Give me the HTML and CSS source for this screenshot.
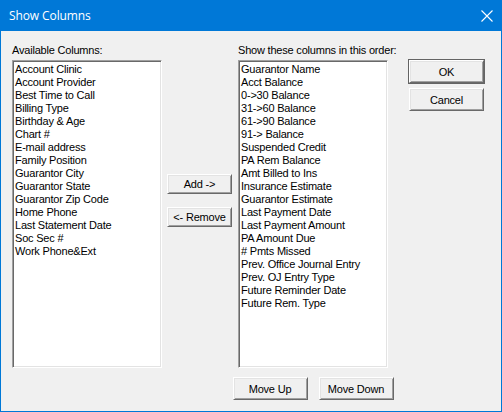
FILE: index.html
```html
<!DOCTYPE html>
<html>
<head>
<meta charset="utf-8">
<link rel="stylesheet" href="styles.css">
</head>
<body>
<div class="window">
  <div class="titlebar">
    <span class="title">Show Columns</span>
    <svg class="close" width="12" height="12" viewBox="0 0 12 12"><path d="M0.5 0.5 L11.5 11.5 M11.5 0.5 L0.5 11.5" stroke="#fff" stroke-width="1.1" fill="none"/></svg>
  </div>
  <div class="content">
    <div class="col col-left">
      <div class="label">Available Columns:</div>
      <div class="listbox">
        <div class="item">Account Clinic</div>
        <div class="item">Account Provider</div>
        <div class="item">Best Time to Call</div>
        <div class="item">Billing Type</div>
        <div class="item">Birthday &amp; Age</div>
        <div class="item">Chart #</div>
        <div class="item">E-mail address</div>
        <div class="item">Family Position</div>
        <div class="item">Guarantor City</div>
        <div class="item">Guarantor State</div>
        <div class="item">Guarantor Zip Code</div>
        <div class="item">Home Phone</div>
        <div class="item">Last Statement Date</div>
        <div class="item">Soc Sec #</div>
        <div class="item">Work Phone&amp;Ext</div>
      </div>
    </div>
    <div class="col col-mid">
      <button class="btn btn-small">Add -&gt;</button>
      <button class="btn btn-small">&lt;- Remove</button>
    </div>
    <div class="col col-right">
      <div class="label">Show these columns in this order:</div>
      <div class="listbox">
        <div class="item">Guarantor Name</div>
        <div class="item">Acct Balance</div>
        <div class="item">0-&gt;30 Balance</div>
        <div class="item">31-&gt;60 Balance</div>
        <div class="item">61-&gt;90 Balance</div>
        <div class="item">91-&gt; Balance</div>
        <div class="item">Suspended Credit</div>
        <div class="item">PA Rem Balance</div>
        <div class="item">Amt Billed to Ins</div>
        <div class="item">Insurance Estimate</div>
        <div class="item">Guarantor Estimate</div>
        <div class="item">Last Payment Date</div>
        <div class="item">Last Payment Amount</div>
        <div class="item">PA Amount Due</div>
        <div class="item"># Pmts Missed</div>
        <div class="item">Prev. Office Journal Entry</div>
        <div class="item">Prev. OJ Entry Type</div>
        <div class="item">Future Reminder Date</div>
        <div class="item">Future Rem. Type</div>
      </div>
      <div class="move-row">
        <button class="btn">Move Up</button>
        <button class="btn">Move Down</button>
      </div>
    </div>
    <div class="col col-side">
      <button class="btn btn-default">OK</button>
      <button class="btn">Cancel</button>
    </div>
  </div>
</div>
</body>
</html>
```
FILE: styles.css
```css
html, body {
  margin: 0;
  padding: 0;
  background: #f0f0f0;
}

.window {
  width: 502px;
  height: 412px;
  box-sizing: border-box;
  border: 1px solid #0078d7;
  border-top: none;
  background: #f0f0f0;
  font-family: "Liberation Sans", Arial, sans-serif;
  font-size: 11px;
  letter-spacing: -0.2px;
  color: #000;
  overflow: hidden;
}

.titlebar {
  height: 31px;
  background: #0078d7;
  display: flex;
  align-items: center;
  justify-content: space-between;
  padding: 0 8px 0 8px;
  margin: 0 -1px;
  box-sizing: border-box;
}

.title {
  color: #fff;
  font-family: "Open Sans", "Noto Sans", sans-serif;
  font-size: 12px;
  letter-spacing: -0.1px;
  padding-left: 1px;
  padding-bottom: 1px;
}

.close {
  margin-right: 1px;
  margin-top: 1px;
}

.content {
  display: flex;
  align-items: flex-start;
  padding: 13px 0 0 11px;
}

.col {
  display: flex;
  flex-direction: column;
}

.col-left, .col-right {
  width: 150px;
  flex-shrink: 0;
}

.label {
  height: 13px;
  line-height: 13px;
  margin-bottom: 3px;
  white-space: nowrap;
}

.listbox {
  height: 308px;
  box-sizing: border-box;
  background: #fff;
  border-top: 1px solid #a0a0a0;
  border-left: 1px solid #a0a0a0;
  border-right: 1px solid #fff;
  border-bottom: 1px solid #fff;
  box-shadow: inset 1px 1px 0 #696969, inset -1px -1px 0 #e3e3e3;
  padding: 2px 2px;
  overflow: hidden;
}

.item {
  height: 13px;
  line-height: 13px;
  white-space: nowrap;
}

.col-mid {
  width: 65px;
  flex-shrink: 0;
  margin-left: 5px;
  margin-right: 6px;
  padding-top: 130px;
  gap: 13px;
}

.btn {
  width: 75px;
  height: 23px;
  flex-shrink: 0;
  box-sizing: border-box;
  padding: 0;
  margin: 0;
  font-family: "Liberation Sans", Arial, sans-serif;
  font-size: 11px;
  letter-spacing: -0.2px;
  color: #000;
  background: #f0f0f0;
  border-top: 1px solid #fff;
  border-left: 1px solid #fff;
  border-right: 1px solid #696969;
  border-bottom: 1px solid #696969;
  box-shadow: inset 1px 1px 0 #e3e3e3, inset -1px -1px 0 #a0a0a0;
  border-radius: 0;
  line-height: 20px;
}

.btn-small {
  width: 65px;
  height: 20px;
  line-height: 17px;
}

.btn-default {
  outline: 1px solid #646464;
  outline-offset: 0;
}

.move-row {
  display: flex;
  justify-content: center;
  gap: 11px;
  margin-top: 9px;
}

.col-side {
  margin-left: 21px;
  flex-shrink: 0;
  padding-top: 16px;
  gap: 5px;
}
```
